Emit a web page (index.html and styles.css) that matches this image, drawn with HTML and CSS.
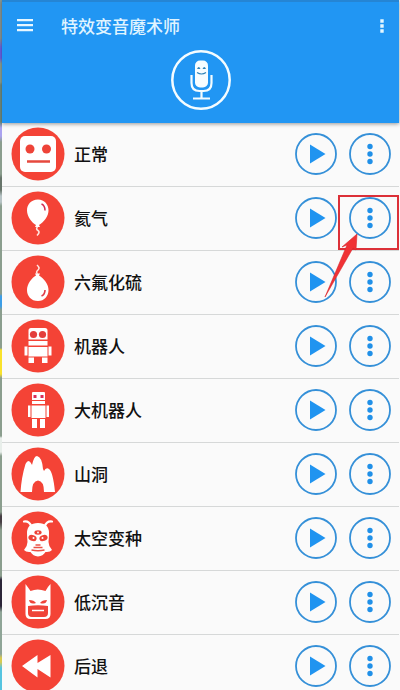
FILE: index.html
```html
<!DOCTYPE html>
<html lang="zh-CN">
<head>
<meta charset="utf-8">
<meta name="viewport" content="width=device-width, initial-scale=1">
<title>特效变音魔术师</title>
<link rel="stylesheet" href="styles.css">
</head>
<body>
<svg class="symbols" aria-hidden="true">
  <symbol id="play" viewBox="0 0 42 42"><circle cx="21" cy="21" r="20" fill="none" stroke="#3590d8" stroke-width="1.8"/><path d="M15 11.5 30.5 21 15 30.5Z" fill="#2094f0"/></symbol>
  <symbol id="more" viewBox="0 0 42 42"><circle cx="21" cy="21" r="20" fill="none" stroke="#3590d8" stroke-width="1.8"/><g fill="#2090e8"><circle cx="21" cy="13.5" r="2.7"/><circle cx="21" cy="21" r="2.7"/><circle cx="21" cy="28.5" r="2.7"/></g></symbol>
</svg>
<div class="app">
  <header class="header">
    <div class="toolbar">
      <button class="tool" aria-label="菜单"><svg width="16" height="14" viewBox="0 0 16 14"><path d="M0 1.200h16M0 6.200h16M0 11.200h16" stroke="#e8f7ff" stroke-width="2.200"/></svg></button>
      <h1 class="title">特效变音魔术师</h1>
      <button class="tool" aria-label="更多选项"><svg width="4" height="14" viewBox="0 0 4 14"><path d="M.3 .3h3.4v3.4H.3zM.3 5.3h3.4v3.4H.3zM.3 10.3h3.4v3.4H.3z" fill="#e4f7ff"/></svg></button>
    </div>
    <button class="mic" aria-label="录音">
      <svg width="60" height="60" viewBox="0 0 60 60"><circle cx="30" cy="30" r="28.7" fill="none" stroke="#f4fcff" stroke-width="2.5"/><rect x="24" y="10.500" width="13" height="27" rx="5" fill="#f7fdff"/><path d="M20.500 25v8q0 8 8 8h4q8 0 8-8v-8M30.500 41v8M22 48.500h17" fill="none" stroke="#f4fcff" stroke-width="2.200"/><path d="M26 19q1.800-4 3.500 0ZM31.500 19q1.800-4 3.500 0Z" fill="#2f83b8"/><path d="M26 22.500q4.500 3 9 0" fill="none" stroke="#2f83b8" stroke-width="1.200"/></svg>
    </button>
  </header>
  <main>
  <ul class="effects">
    <li class="effect">
      <svg class="avatar" viewBox="0 0 54 54"><circle cx="27" cy="27" r="26.500" fill="#f44336"/><rect x="9" y="9" width="36" height="36" rx="5" fill="#fff"/><circle cx="19" cy="22" r="4.500" fill="#ee4338"/><circle cx="35.500" cy="22" r="4.500" fill="#ee4338"/><path d="M16 34.500h23" stroke="#e6493e" stroke-width="2.500"/></svg>
      <span class="name">正常</span>
      <button class="action" aria-label="播放 正常"><svg><use href="#play"/></svg></button>
      <button class="action" aria-label="更多 正常"><svg><use href="#more"/></svg></button>
    </li>
    <li class="effect">
      <svg class="avatar" viewBox="0 0 54 54"><circle cx="27" cy="27" r="26.500" fill="#f44336"/><path d="M27 8.500c-7 0-11 5-11 11 0 6 5 12.500 9 14.500l-1 2h5l-1-2c5-3 9.500-9 9.500-14.500 0-6-4-11-10.500-11Z" fill="#fff"/><path d="M30.500 13q3.500 1.500 3.500 6.500" fill="none" stroke="#d22b50" stroke-width="1.500"/><path d="M26.500 36q-2 2 .5 3.500t-1 5" fill="none" stroke="#ffe5df" stroke-width="1.600"/></svg>
      <span class="name">氦气</span>
      <button class="action" aria-label="播放 氦气"><svg><use href="#play"/></svg></button>
      <button class="action" aria-label="更多 氦气"><svg><use href="#more"/></svg></button>
      <svg class="callout" viewBox="0 0 76 106" aria-hidden="true"><rect x="16" y="5" width="59" height="53" fill="none" stroke="#dc3038" stroke-width="2"/><path d="m2 106 22-52-5 2L34 43l-1 16-3-2Z" fill="#f03235" stroke="#d9262d" stroke-width=".6"/></svg>
    </li>
    <li class="effect">
      <svg class="avatar" viewBox="0 0 54 54"><circle cx="27" cy="27" r="26.500" fill="#f44336"/><path d="M27 46c-7 0-11-5-11-11 0-6 5-12.500 9-14.500l-1-2h5l-1 2c5 3 9.500 9 9.500 14.500 0 6-4 11-10.500 11Z" fill="#fff"/><path d="M34 35q0 4.500-3.500 6" fill="none" stroke="#df3c48" stroke-width="1.600"/><path d="M26.500 19q-2-2 .5-4t-1-5" fill="none" stroke="#ffe5df" stroke-width="1.600"/></svg>
      <span class="name">六氟化硫</span>
      <button class="action" aria-label="播放 六氟化硫"><svg><use href="#play"/></svg></button>
      <button class="action" aria-label="更多 六氟化硫"><svg><use href="#more"/></svg></button>
    </li>
    <li class="effect">
      <svg class="avatar" viewBox="0 0 54 54"><circle cx="27" cy="27" r="26.500" fill="#f44336"/><path d="M20 9h14q2.500 0 2.500 2.500V20.500h-19v-9Q17.500 9 20 9ZM17.500 22h19v4.500h-19ZM17.500 28h19v9.500h-19ZM13.500 27.500h3v9h-3ZM37.500 27.500h3v9h-3ZM17.500 38.500H23V44h-5.500ZM31 38.500h5.500V44H31Z" fill="#fff"/><circle cx="22.500" cy="15.500" r="3.600" fill="#e43e3b"/><circle cx="31.500" cy="15.500" r="3.600" fill="#e43e3b"/></svg>
      <span class="name">机器人</span>
      <button class="action" aria-label="播放 机器人"><svg><use href="#play"/></svg></button>
      <button class="action" aria-label="更多 机器人"><svg><use href="#more"/></svg></button>
    </li>
    <li class="effect">
      <svg class="avatar" viewBox="0 0 54 54"><circle cx="27" cy="27" r="26.500" fill="#f44336"/><path d="M22 9h11q1 0 1 1v7H21v-7q0-1 1-1ZM21 18h13v3H21ZM20.500 22.500h14V35h-14ZM17 22.500h2.500V34H17ZM35.500 22.500H38V34h-2.500ZM21 36h5v9h-5ZM29 36h5v9h-5Z" fill="#fff"/><path d="M22.500 12h3v3h-3ZM29.500 12h3v3h-3Z" fill="#d82f58"/></svg>
      <span class="name">大机器人</span>
      <button class="action" aria-label="播放 大机器人"><svg><use href="#play"/></svg></button>
      <button class="action" aria-label="更多 大机器人"><svg><use href="#more"/></svg></button>
    </li>
    <li class="effect">
      <svg class="avatar" viewBox="0 0 54 54"><circle cx="27" cy="27" r="26.500" fill="#f44336"/><path d="M9.500 45q1-15 5-28 3-6 6 0l.5 1q2-9 5-9 5 1 6 13l1 2q2-4 5-2 4 3 6 23H33q0-11-6-11.500-6 .5-6 11.500Z" fill="#fff"/></svg>
      <span class="name">山洞</span>
      <button class="action" aria-label="播放 山洞"><svg><use href="#play"/></svg></button>
      <button class="action" aria-label="更多 山洞"><svg><use href="#more"/></svg></button>
    </li>
    <li class="effect">
      <svg class="avatar" viewBox="0 0 54 54"><circle cx="27" cy="27" r="26.500" fill="#f44336"/><path d="M16 22q0-10 11-10t11 10q0 4-.5 9 0 4 3.500 8-2 2.500-6.500 2-2.500 4-7.500 4.500-5-.5-7.500-4.500-4.500.5-6.500-2 3.500-4 3.500-8-.5-5-.5-9Z" fill="#fff"/><path d="M20.500 15.500Q18 9.500 13 10.500M33.500 15.500Q36 9.500 41 10.500" fill="none" stroke="#fff" stroke-width="2.200" stroke-linecap="round"/><g fill="#ee4338"><ellipse cx="21.500" cy="27" rx="4.200" ry="3" transform="rotate(20 21.500 27)"/><ellipse cx="32.500" cy="27" rx="4.200" ry="3" transform="rotate(-20 32.500 27)"/><ellipse cx="27" cy="21.500" rx="3.600" ry="2.200"/></g><g fill="#fff"><circle cx="22.500" cy="27" r="1"/><circle cx="31.500" cy="27" r="1"/><circle cx="27" cy="21.500" r=".9"/></g><path d="M24.500 34h5M22.500 36.500h9M20.500 39q6.500 1.500 13 0" fill="none" stroke="#ec5146" stroke-width="1.300"/></svg>
      <span class="name">太空变种</span>
      <button class="action" aria-label="播放 太空变种"><svg><use href="#play"/></svg></button>
      <button class="action" aria-label="更多 太空变种"><svg><use href="#more"/></svg></button>
    </li>
    <li class="effect">
      <svg class="avatar" viewBox="0 0 54 54"><circle cx="27" cy="27" r="26.500" fill="#f44336"/><path d="M14.500 9q3 4 5 7 7-3 15 0 2-4 5-7v30q0 5-5 5h-15q-5 0-5-5Z" fill="#fff"/><path d="M18 25q5 0 7 3-6 2-7-3ZM36 25q-5 0-7 3 6 2 7-3ZM17 31q10-1.500 20 0v7q0 4-4 4H21q-4 0-4-4Z" fill="#ef4439"/><path d="M21 35.500h12" fill="none" stroke="#fff" stroke-width="1.500"/></svg>
      <span class="name">低沉音</span>
      <button class="action" aria-label="播放 低沉音"><svg><use href="#play"/></svg></button>
      <button class="action" aria-label="更多 低沉音"><svg><use href="#more"/></svg></button>
    </li>
    <li class="effect">
      <svg class="avatar" viewBox="0 0 54 54"><circle cx="27" cy="27" r="26.500" fill="#f44336"/><path d="M11 27 26.500 16v8L39.500 16v22.500L26.500 30v8.500Z" fill="#fff"/></svg>
      <span class="name">后退</span>
      <button class="action" aria-label="播放 后退"><svg><use href="#play"/></svg></button>
      <button class="action" aria-label="更多 后退"><svg><use href="#more"/></svg></button>
    </li>
  </ul>
  </main>
</div>
</body>
</html>
```
FILE: styles.css
```css
* {
  box-sizing: border-box;
}

body {
  margin: 0;
  padding: 0 1px 0 2px;
  font-family: "Noto Sans CJK SC", sans-serif;
  font-size: 17px;
  color: #111;
  background:
    linear-gradient(#889898 0 38px, #6864e8 48px 58px, #8da394 64px 82px, #718e82 85px 122px, #aaa2f0 128px 136px, #8b9e8e 142px 174px, #68756b 178px 190px, #b8c4c6 196px 202px, #8b9e8e 206px 294px, #3d9ee7 296px 306px, #8b9e8e 310px 348px, #f9e22c 350px 374px, #8b9e8e 378px 436px, #e8eeea 438px 452px, #8b9e8e 456px 512px, #463e43 516px 522px, #8b9e8e 530px 576px, #2b2538 580px 606px, #8fa597 612px 654px, #d8c950 658px 662px, #55c4e0 668px) 0 0 / 2px 690px no-repeat,
    #fafafa;
}

button {
  padding: 0;
  border: 0;
  background: none;
}

svg {
  display: block;
}

.symbols {
  display: none;
}

.app {
  display: flex;
  flex-direction: column;
  height: 100vh;
  background: #fafafa;
}

.header {
  position: relative;
  flex: none;
  padding-bottom: 13px;
  border-top: 2px solid #2585d4;
  background: #2196f3;
  box-shadow: 0 1px 4px rgba(0, 0, 0, 0.4);
}

.toolbar {
  display: flex;
  align-items: center;
  height: 48px;
  padding: 0 15px;
}

.title {
  flex: 1;
  margin: 0 0 0 28px;
  font-size: 17px;
  font-weight: 500;
  line-height: 24px;
  color: #e0f4ff;
}

.mic {
  display: block;
  margin: 0 auto;
}

main {
  flex: 1;
  min-height: 0;
  overflow-x: hidden;
  overflow-y: auto;
  scrollbar-width: none;
}

.effects {
  margin: 0;
  padding: 0;
  list-style: none;
}

.effect {
  position: relative;
  display: flex;
  align-items: center;
  gap: 12px;
  height: 64px;
  padding: 0 8px 1px 9px;
  border-bottom: 1px solid #d6d8d8;
}

.avatar {
  flex: none;
  width: 54px;
  height: 54px;
}

.name {
  flex: 1;
  margin-left: -3px;
  font-weight: 500;
  line-height: 24px;
}

.action,
.action svg {
  width: 42px;
  height: 42px;
}

.callout {
  position: absolute;
  z-index: 1;
  top: 4px;
  right: 0;
  width: 76px;
  height: 106px;
}
```
